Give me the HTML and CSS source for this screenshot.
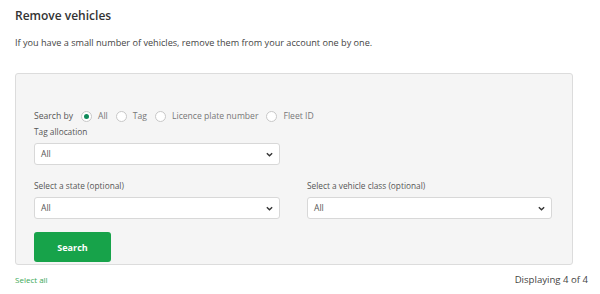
FILE: index.html
```html
<!DOCTYPE html>
<html lang="en">
<head>
<meta charset="utf-8">
<title>Remove vehicles</title>
<link rel="stylesheet" href="styles.css">
</head>
<body>
<div class="page">
  <h1 class="title">Remove vehicles</h1>
  <p class="intro">If you have a small number of vehicles, remove them from your account one by one.</p>
  <div class="panel">
    <div class="search-by">
      <span class="label-inline">Search by</span>
      <span class="radio checked"></span><span class="radio-text">All</span>
      <span class="radio"></span><span class="radio-text">Tag</span>
      <span class="radio"></span><span class="radio-text">Licence plate number</span>
      <span class="radio"></span><span class="radio-text">Fleet ID</span>
    </div>
    <div class="field first">
      <div class="label">Tag allocation</div>
      <div class="select"><span>All</span><svg class="chev" viewBox="0 0 10 6" width="7" height="5"><path d="M1.2 1.2 L5 4.8 L8.8 1.2" fill="none" stroke="#333" stroke-width="2"/></svg></div>
    </div>
    <div class="row">
      <div class="field">
        <div class="label">Select a state (optional)</div>
        <div class="select"><span>All</span><svg class="chev" viewBox="0 0 10 6" width="7" height="5"><path d="M1.2 1.2 L5 4.8 L8.8 1.2" fill="none" stroke="#333" stroke-width="2"/></svg></div>
      </div>
      <div class="field">
        <div class="label">Select a vehicle class (optional)</div>
        <div class="select"><span>All</span><svg class="chev" viewBox="0 0 10 6" width="7" height="5"><path d="M1.2 1.2 L5 4.8 L8.8 1.2" fill="none" stroke="#333" stroke-width="2"/></svg></div>
      </div>
    </div>
    <button class="btn">Search</button>
  </div>
  <div class="footer">
    <span class="link">Select all</span>
    <span class="count">Displaying 4 of 4</span>
  </div>
</div>
</body>
</html>
```
FILE: styles.css
```css
* { box-sizing: border-box; }
html, body { margin: 0; padding: 0; background: #fff; }
body { font-family: "Open Sans", "Noto Sans", sans-serif; color: #444; }
.page { padding: 7px 12px 0 15px; width: 600px; }
.title { margin: 0; font-size: 12px; font-weight: 600; color: #333; line-height: 18px; }
.intro { margin: 12px 0 0; font-size: 9.15px; line-height: 12px; color: #444; }
.panel {
  margin-top: 24px;
  width: 558px;
  height: 192px;
  background: #f5f5f5;
  border: 1px solid #dcdcdc;
  border-radius: 3px;
  padding: 35px 20px 0 18px;
}
.search-by { display: flex; align-items: center; height: 14px; font-size: 8.6px; }
.label-inline { color: #555; margin-right: 8px; }
.radio {
  width: 11px; height: 11px; border-radius: 50%;
  background: #fff; border: 1px solid #c8c8c8;
  display: inline-flex; align-items: center; justify-content: center;
  margin-right: 6px; flex: none;
}
.radio.checked::after {
  content: ""; width: 5px; height: 5px; border-radius: 50%; background: #0f8a5a;
}
.radio-text { color: #777; margin-right: 8px; }
.field { display: flex; flex-direction: column; }
.label { font-size: 8.3px; color: #555; line-height: 12px; margin-top: 4px; }
.field.first .label { margin-top: 3px; }
.select {
  margin-top: 5px;
  width: 246px; height: 22px;
  background: #fff; border: 1px solid #d8d8d8; border-radius: 3px;
  display: flex; align-items: center; justify-content: space-between;
  padding: 0 6px 0 6px;
  font-size: 8.6px; color: #555;
}
.chev { display: block; }
.row { display: flex; gap: 27px; margin-top: 11px; }
.row .field:last-child .select { width: 245px; }
.btn {
  margin-top: 13px;
  width: 77px; height: 30px;
  background: #17a34a; border: none; border-radius: 3px;
  color: #fff; font-family: "Open Sans", sans-serif; font-weight: 700; font-size: 9px;
  display: flex; align-items: center; justify-content: center; padding: 0;
}
.footer { display: flex; justify-content: space-between; align-items: baseline; margin-top: 9px; line-height: 12px; }
.link { color: #3aa957; font-size: 8px; }
.count { color: #444; font-size: 9.6px; }
```
